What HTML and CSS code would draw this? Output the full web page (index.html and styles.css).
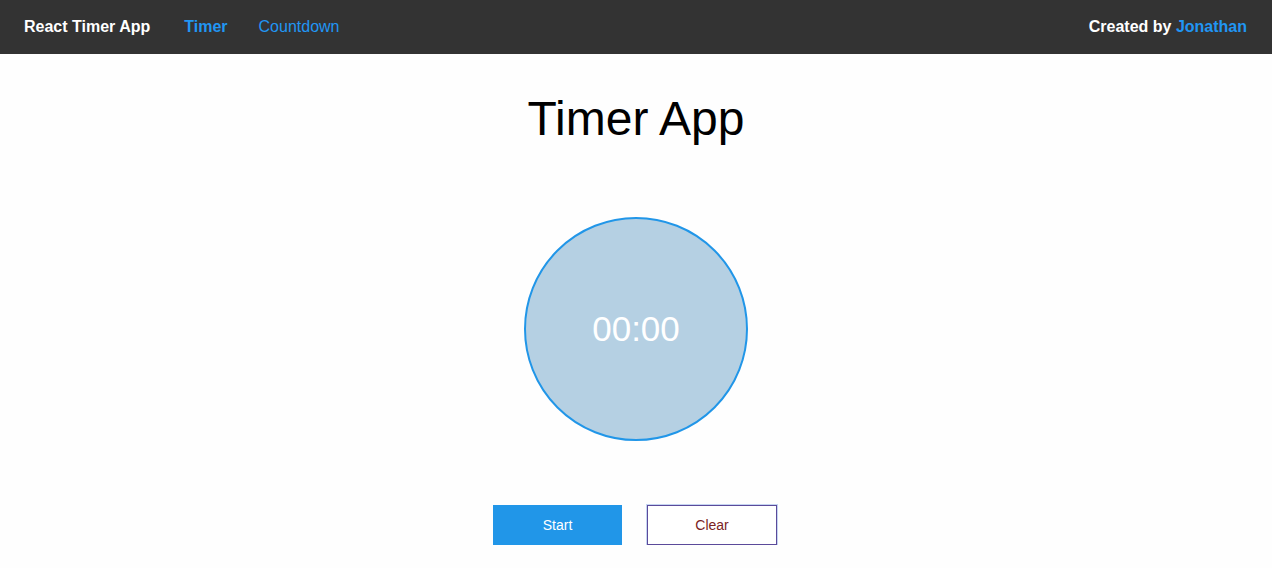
FILE: index.html
```html
<!DOCTYPE html>
<html>
<head>
<meta charset="utf-8">
<link rel="stylesheet" href="styles.css">
</head>
<body>
<nav class="navbar">
  <div class="nav-left">
    <span class="brand">React Timer App</span>
    <a class="nav-link active" href="#">Timer</a>
    <a class="nav-link" href="#">Countdown</a>
  </div>
  <div class="nav-right">Created by <a class="author" href="#">Jonathan</a></div>
</nav>
<main class="main">
  <h1 class="title">Timer App</h1>
  <div class="clock"><span class="clock-text">00:00</span></div>
  <div class="controls">
    <button class="btn btn-start">Start</button>
    <button class="btn btn-clear">Clear</button>
  </div>
</main>
</body>
</html>
```

FILE: styles.css
```css
html, body {
  margin: 0;
  padding: 0;
  background: #fefefe;
  font-family: "Liberation Sans", Arial, sans-serif;
}
.navbar {
  height: 54px;
  background: #333333;
  display: flex;
  align-items: center;
  justify-content: space-between;
  padding: 0 25px 0 24px;
  font-size: 16px;
}
.nav-left {
  display: flex;
  align-items: center;
}
.brand {
  color: #ffffff;
  font-weight: bold;
  margin-right: 34px;
}
.nav-link {
  color: #2196f3;
  text-decoration: none;
  margin-right: 31px;
}
.nav-link.active {
  font-weight: bold;
}
.nav-right {
  color: #ffffff;
  font-weight: bold;
}
.author {
  color: #2196f3;
  text-decoration: none;
}
.main {
  display: flex;
  flex-direction: column;
  align-items: center;
}
.title {
  margin: 37px 0 0;
  font-size: 48px;
  font-weight: normal;
  color: #000;
  line-height: 55px;
}
.clock {
  margin-top: 71px;
  width: 220px;
  height: 220px;
  border: 2px solid #2196e8;
  border-radius: 50%;
  background: #b5d0e3;
  display: flex;
  align-items: center;
  justify-content: center;
}
.clock-text {
  color: #ffffff;
  font-size: 35px;
  font-weight: 300;
}
.controls {
  margin-top: 64px;
  margin-right: 2px;
  display: flex;
  gap: 25px;
}
.btn {
  height: 40px;
  font-family: "Liberation Sans", Arial, sans-serif;
  font-size: 14px;
  cursor: pointer;
  box-sizing: border-box;
}
.btn-start {
  width: 129px;
  background: #2196e8;
  color: #fff;
  border: none;
}
.btn-clear {
  width: 130px;
  background: #fff;
  color: #7b2323;
  border: 1px solid #5b4a9a;
  box-shadow: 0 0 0 1px #c4d4f2;
}
```
